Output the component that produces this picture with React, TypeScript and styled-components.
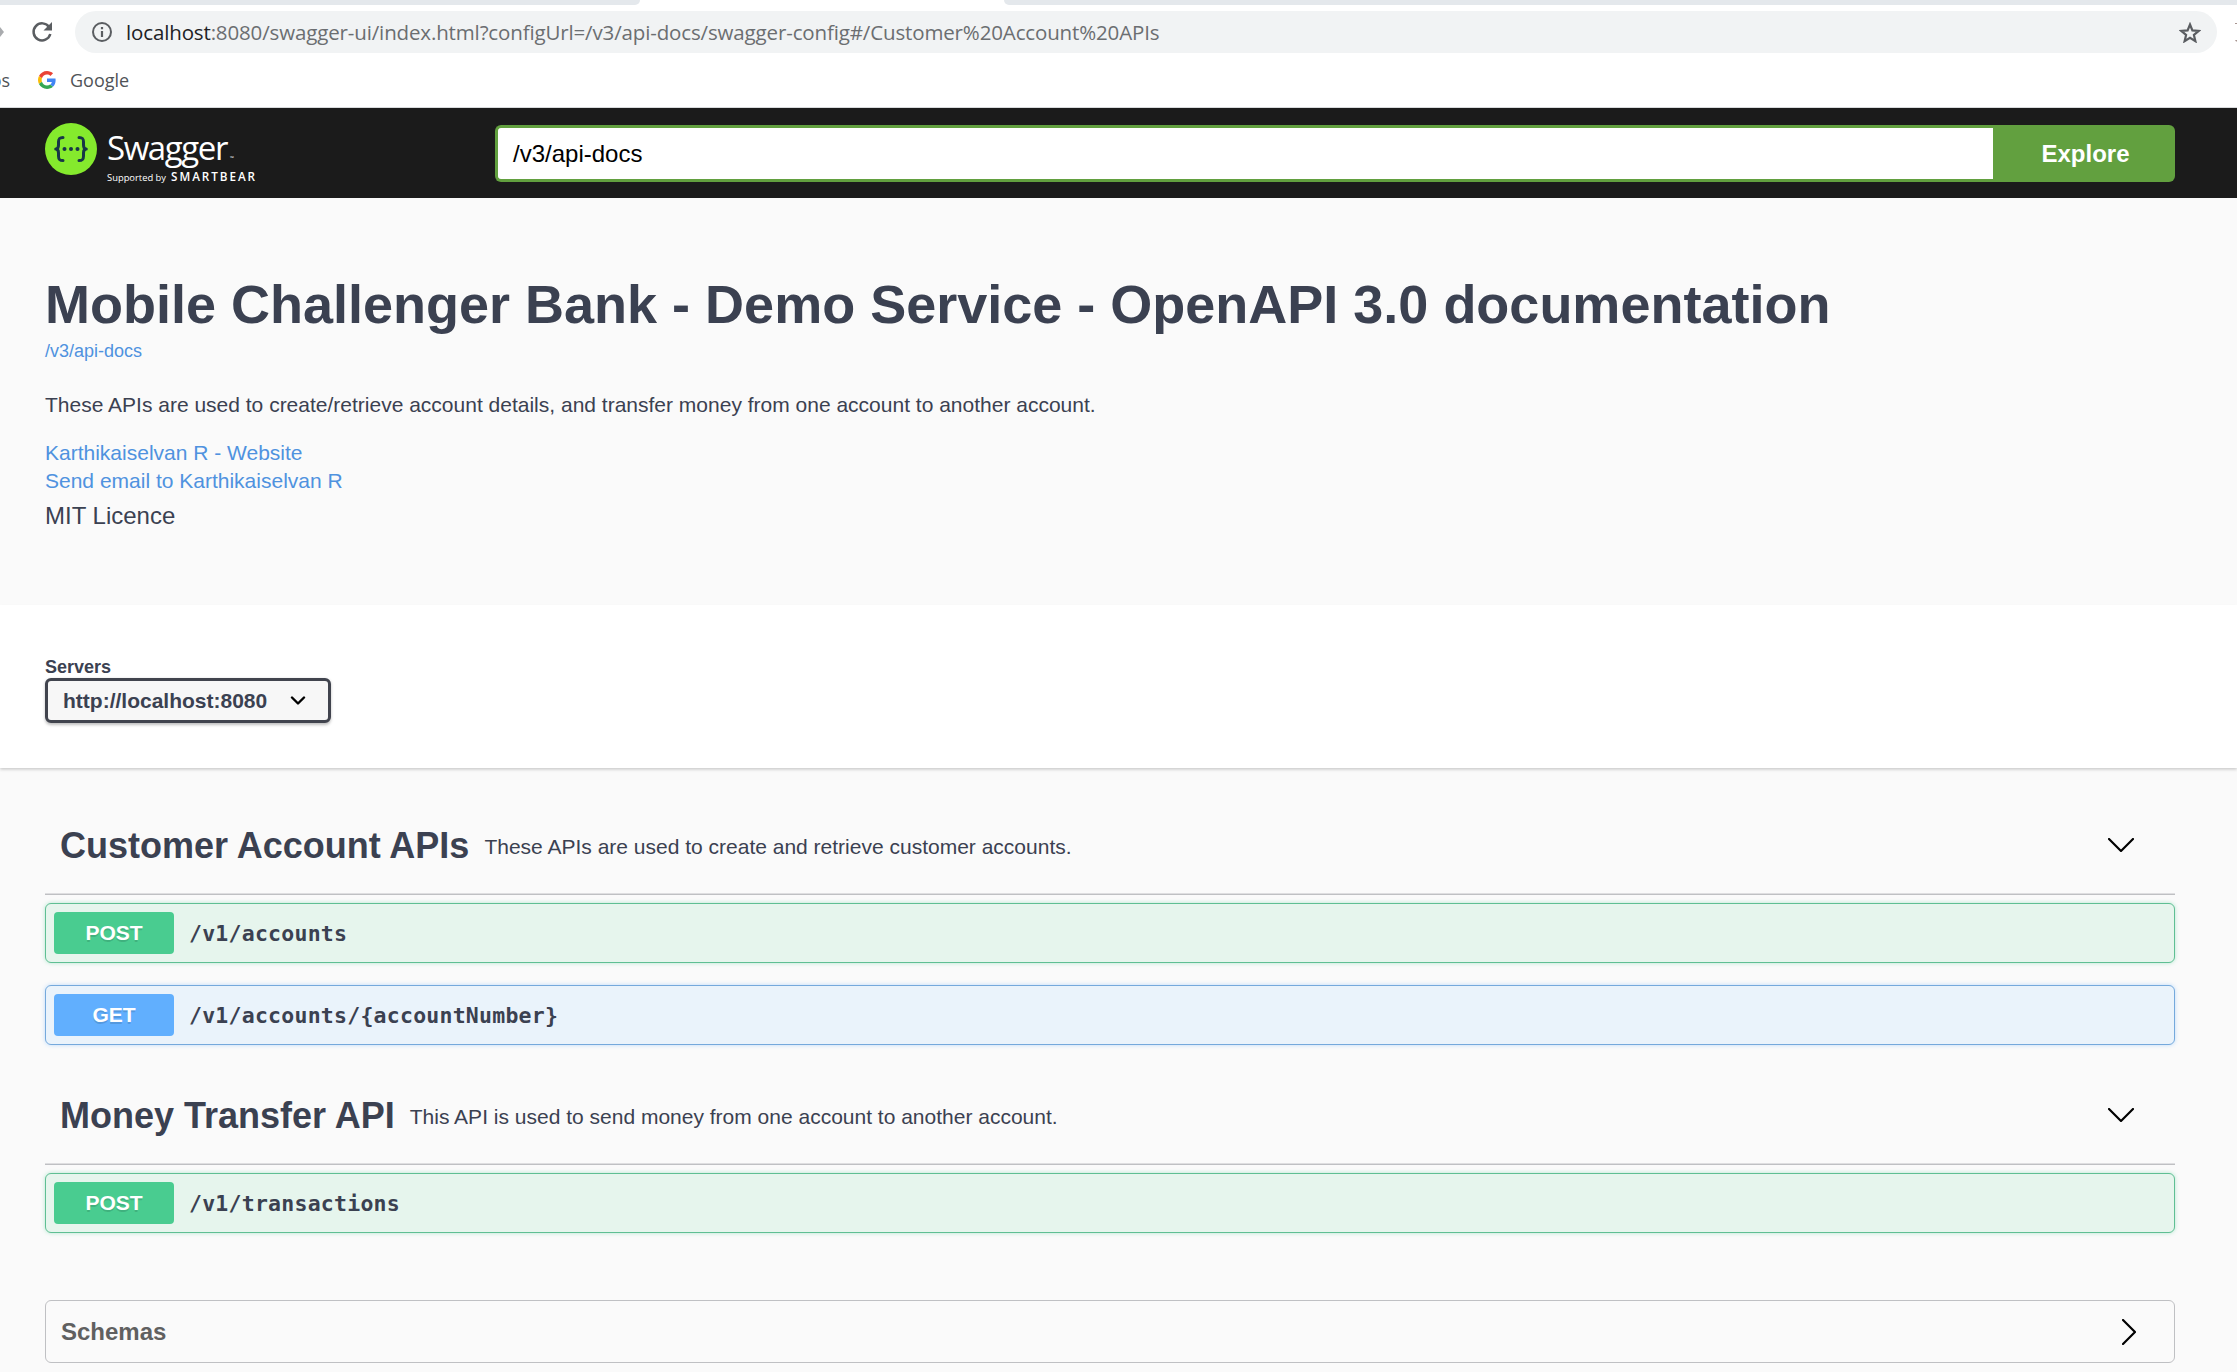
import React from "react";
import styled, { createGlobalStyle } from "styled-components";

const Global = createGlobalStyle`
  * { box-sizing: border-box; }
  html, body { margin: 0; padding: 0; background: #fafafa; overflow: hidden; }
  body { font-family: "Liberation Sans", Arial, sans-serif; color: #3b4151; }
  a { color: #4f92df; text-decoration: none; }
  svg { display: block; flex: none; }
`;

const Page = styled.div`
  width: 2237px;
  height: 1372px;
  overflow: hidden;
  display: flex;
  flex-direction: column;
  > * { flex: none; }
`;

const Browser = styled.header`
  height: 108px;
  background: #fff;
  border-bottom: 1px solid #d8dadc;
  font-family: "Open Sans", "Noto Sans", sans-serif;
`;

const TabStrip = styled.div`
  display: flex;
  justify-content: space-between;
  height: 5px;
`;

const TabEdge = styled.div<{ $w: number; $side: "left" | "right" }>`
  width: ${(p) => p.$w}px;
  background: #e4e8ec;
  border-radius: ${(p) => (p.$side === "left" ? "0 0 8px 0" : "0 0 0 8px")};
`;

const Toolbar = styled.div`
  display: flex;
  align-items: center;
  height: 42px;
  margin-top: 6px;
`;

const NavIcons = styled.div`
  display: flex;
  justify-content: space-between;
  align-items: center;
  width: 53px;
  margin-right: 22px;
`;

const Omnibox = styled.div`
  display: flex;
  align-items: center;
  width: 2142px;
  height: 42px;
  margin-right: 18px;
  padding: 0 16px 0 17px;
  border-radius: 21px;
  background: #f1f3f4;
`;

const Url = styled.span`
  flex: 1;
  margin-left: 14px;
  font-size: 20.5px;
  letter-spacing: -0.14px;
  line-height: 42px;
  white-space: nowrap;
  color: #6b6e71;
  b { font-weight: 400; color: #202124; }
`;

const Bookmarks = styled.div`
  display: flex;
  align-items: center;
  height: 54px;
  font-size: 18px;
  color: #505357;
`;

const Clipped = styled.span`
  display: flex;
  justify-content: flex-end;
  width: 10px;
  margin-right: 28px;
  overflow: hidden;
`;

const BookmarkLabel = styled.span`
  margin: -1px 0 0 14px;
`;

const TopBar = styled.div`
  display: flex;
  height: 90px;
  padding: 15px 62px 0 45px;
  background: #1b1b1b;
`;

const Logo = styled.div`
  display: flex;
  width: 450px;
  color: #fff;
  font-family: "Open Sans", sans-serif;
`;

const LogoWords = styled.div`
  margin-left: 10px;
`;

const Wordmark = styled.div`
  display: flex;
  align-items: baseline;
  height: 45px;
  padding-top: 2px;
  font-size: 33px;
  line-height: 45px;
  letter-spacing: -1.4px;
  small { font-size: 5px; letter-spacing: 0; margin-left: 3px; }
`;

const Tagline = styled.div`
  display: flex;
  align-items: baseline;
  gap: 5px;
  line-height: 16px;
  font-size: 9.4px;
  white-space: nowrap;
  b { font-size: 11.7px; font-weight: 600; letter-spacing: 1.95px; }
`;

const SearchForm = styled.div`
  display: flex;
  flex: 1;
  height: 57px;
  margin-top: 2px;
`;

const SearchInput = styled.div`
  flex: 1;
  padding-left: 15px;
  border: 3px solid #62a03f;
  border-right: 0;
  border-radius: 6px 0 0 6px;
  background: #fff;
  color: #000;
  font-size: 24px;
  line-height: 51px;
`;

const ExploreButton = styled.div`
  width: 182px;
  padding-left: 3px;
  border-radius: 0 6px 6px 0;
  background: #62a03f;
  color: #fff;
  font-size: 24px;
  font-weight: 700;
  line-height: 57px;
  text-align: center;
`;

const Info = styled.section`
  height: 407px;
  padding: 75px 45px 0;
`;

const Title = styled.h1`
  margin: 0;
  font-size: 54px;
  line-height: 62px;
  white-space: nowrap;
`;

const InfoLine = styled.div<{ $size: number; $top?: number; $h: number }>`
  margin-top: ${(p) => p.$top ?? 0}px;
  font-size: ${(p) => p.$size}px;
  line-height: ${(p) => p.$h}px;
`;

const Servers = styled.section`
  height: 163px;
  padding: 51px 45px 0;
  background: #fff;
  box-shadow: 0 1.5px 3px rgba(0, 0, 0, 0.2);
`;

const ServersLabel = styled.div`
  font-size: 18px;
  font-weight: 700;
  line-height: 22px;
`;

const Select = styled.div`
  display: flex;
  align-items: center;
  justify-content: space-between;
  width: 286px;
  height: 45px;
  padding: 0 22px 0 15px;
  border: 3px solid #41444e;
  border-radius: 6px;
  background: #f7f7f7;
  box-shadow: 0 1.5px 3px rgba(0, 0, 0, 0.25);
  font-size: 21px;
  font-weight: 700;
`;

const Operations = styled.main`
  padding: 30px 62px 0 45px;
`;

const TagHead = styled.div`
  display: flex;
  align-items: center;
  height: 97px;
  padding: 0 41px 0 15px;
  border-bottom: 1px solid #bfc0c3;
  box-shadow: inset 0 -1px 0 #dedee0;
  svg { margin-bottom: 3px; }
`;

const TagSection = styled.section`
  margin-bottom: 23px;
  ${TagHead} { margin-bottom: 8px; }
`;

const TagName = styled.h3`
  margin: 0 15px 0 0;
  font-size: 36px;
  line-height: 42px;
`;

const TagText = styled.span`
  flex: 1;
  padding-top: 2px;
  font-size: 21px;
`;

const tones = {
  POST: { solid: "#49cc90", line: "#5fbf93", fill: "#e6f5ed" },
  GET: { solid: "#61affe", line: "#75a9dc", fill: "#eaf3fb" },
};
type Verb = keyof typeof tones;

const OpRow = styled.div<{ $verb: Verb }>`
  display: flex;
  align-items: center;
  height: 60px;
  margin-bottom: 22px;
  padding-left: 8px;
  border: 1px solid ${(p) => tones[p.$verb].line};
  border-radius: 6px;
  background: ${(p) => tones[p.$verb].fill};
  box-shadow: 0 0 4px ${(p) => tones[p.$verb].solid}66;
`;

const Method = styled.span<{ $verb: Verb }>`
  width: 120px;
  margin-right: 15px;
  border-radius: 4px;
  background: ${(p) => tones[p.$verb].solid};
  color: #fff;
  font-size: 21px;
  font-weight: 700;
  line-height: 42px;
  text-align: center;
  text-shadow: 0 1.5px 0 rgba(0, 0, 0, 0.12);
`;

const Path = styled.span`
  font-family: "DejaVu Sans Mono", monospace;
  font-size: 21.5px;
  letter-spacing: 0.24px;
  font-weight: 700;
`;

const Schemas = styled.section`
  display: flex;
  align-items: center;
  justify-content: space-between;
  height: 63px;
  margin-top: 67px;
  padding: 0 38px 0 15px;
  border: 1px solid #bfc0c3;
  border-radius: 6px;
  color: #606060;
  font-size: 24px;
  font-weight: 700;
`;

const Chevron = ({ d, w, h, s = 2.2 }: { d: string; w: number; h: number; s?: number }) => (
  <svg width={w} height={h} viewBox={`0 0 ${w} ${h}`} fill="none" stroke="#000" strokeWidth={s} strokeLinecap="round" strokeLinejoin="round">
    <path d={d} />
  </svg>
);

const SwaggerMark = () => (
  <svg width="52" height="52" viewBox="0 0 52 52">
    <circle cx="26" cy="26" r="26" fill="#85ea2d" />
    <g fill="none" stroke="#173647" strokeWidth="3" strokeLinecap="round" strokeLinejoin="round">
      <path d="M18 14.500c-4 0-4.500 1.500-4.500 4.500v3c0 2.500-1 4-2.800 4 1.800 0 2.800 1.500 2.800 4v3c0 3 .5 4.500 4.500 4.500" />
      <path d="M34 14.500c4 0 4.500 1.500 4.500 4.500v3c0 2.500 1 4 2.800 4-1.800 0-2.800 1.500-2.800 4v3c0 3-.5 4.500-4.500 4.500" />
    </g>
    <g fill="#173647">
      <circle cx="19.500" cy="26" r="2" />
      <circle cx="26" cy="26" r="2" />
      <circle cx="32.500" cy="26" r="2" />
    </g>
  </svg>
);

const sections: { name: string; text: string; ops: [Verb, string][] }[] = [
  {
    name: "Customer Account APIs",
    text: "These APIs are used to create and retrieve customer accounts.",
    ops: [["POST", "/v1/accounts"], ["GET", "/v1/accounts/{accountNumber}"]],
  },
  {
    name: "Money Transfer API",
    text: "This API is used to send money from one account to another account.",
    ops: [["POST", "/v1/transactions"]],
  },
];

export default function App() {
  return (
    <Page>
      <Global />
      <Browser>
        <TabStrip>
          <TabEdge $w={640} $side="left" />
          <TabEdge $w={1233} $side="right" />
        </TabStrip>
        <Toolbar>
          <NavIcons>
            <svg width="4" height="10" viewBox="0 0 4 10"><path d="M0 0l4 5-4 5z" fill="#a9abae" /></svg>
            <svg width="22" height="22" viewBox="0 0 22 22" fill="none">
              <path d="M18.200 6.200A8.500 8.500 0 1 0 19.300 13" stroke="#5a5d61" strokeWidth="2.500" />
              <path d="M21 1v8.500h-8.500z" fill="#5a5d61" />
            </svg>
          </NavIcons>
          <Omnibox>
            <svg width="20" height="20" viewBox="0 0 20 20" fill="none" stroke="#5a5d61" strokeWidth="2">
              <circle cx="10" cy="10" r="9" />
              <path d="M10 9v6M10 5v2.200" strokeWidth="2.200" />
            </svg>
            <Url><b>localhost</b>:8080/swagger-ui/index.html?configUrl=/v3/api-docs/swagger-config#/Customer%20Account%20APIs</Url>
            <svg width="22" height="21" viewBox="0 0 22 21" fill="none" stroke="#5a5d61" strokeWidth="2.200">
              <path d="M11 2.500l2.400 5.900 6.300.5-4.800 4.100 1.500 6.200-5.400-3.300-5.400 3.300 1.500-6.200-4.800-4.100 6.300-.5z" />
            </svg>
          </Omnibox>
          <svg width="2" height="20" viewBox="0 0 2 20">
            <path d="M0 1h2v1H0zM0 18h2v1.500H1z" fill="#a89590" />
          </svg>
        </Toolbar>
        <Bookmarks>
          <Clipped>ps</Clipped>
          <svg width="18" height="18" viewBox="0 0 48 48">
            <path fill="#EA4335" d="M24 9.500c3.540 0 6.710 1.220 9.210 3.600l6.850-6.850C35.900 2.380 30.470 0 24 0 14.620 0 6.510 5.380 2.560 13.220l7.980 6.190C12.430 13.720 17.740 9.500 24 9.500z" />
            <path fill="#4285F4" d="M46.980 24.550c0-1.570-.15-3.090-.38-4.550H24v9.020h12.940c-.58 2.960-2.260 5.480-4.780 7.180l7.730 6c4.510-4.180 7.090-10.360 7.090-17.650z" />
            <path fill="#FBBC05" d="M10.530 28.590c-.48-1.450-.76-2.990-.76-4.590s.27-3.140.76-4.590l-7.980-6.190C.92 16.460 0 20.120 0 24c0 3.880.92 7.540 2.560 10.780l7.970-6.190z" />
            <path fill="#34A853" d="M24 48c6.480 0 11.930-2.130 15.890-5.810l-7.730-6c-2.150 1.450-4.920 2.300-8.160 2.300-6.260 0-11.570-4.220-13.470-9.910l-7.980 6.190C6.510 42.620 14.620 48 24 48z" />
          </svg>
          <BookmarkLabel>Google</BookmarkLabel>
        </Bookmarks>
      </Browser>

      <TopBar>
        <Logo>
          <SwaggerMark />
          <LogoWords>
            <Wordmark>Swagger<small>™</small></Wordmark>
            <Tagline>Supported by <b>SMARTBEAR</b></Tagline>
          </LogoWords>
        </Logo>
        <SearchForm>
          <SearchInput>/v3/api-docs</SearchInput>
          <ExploreButton>Explore</ExploreButton>
        </SearchForm>
      </TopBar>

      <Info>
        <Title>Mobile Challenger Bank - Demo Service - OpenAPI 3.0 documentation</Title>
        <InfoLine $size={18} $top={5} $h={22}><a>/v3/api-docs</a></InfoLine>
        <InfoLine $size={21} $top={29} $h={28}>These APIs are used to create/retrieve account details, and transfer money from one account to another account.</InfoLine>
        <InfoLine $size={21} $top={20} $h={28}><a>Karthikaiselvan R - Website</a></InfoLine>
        <InfoLine $size={21} $h={28}><a>Send email to Karthikaiselvan R</a></InfoLine>
        <InfoLine $size={24} $top={7} $h={28}>MIT Licence</InfoLine>
      </Info>

      <Servers>
        <ServersLabel>Servers</ServersLabel>
        <Select>
          http://localhost:8080
          <Chevron w={16} h={9} d="M2 1.500l6 6 6-6" s={2.4} />
        </Select>
      </Servers>

      <Operations>
        {sections.map((s) => (
          <TagSection key={s.name}>
            <TagHead>
              <TagName>{s.name}</TagName>
              <TagText>{s.text}</TagText>
              <Chevron w={26} h={14} d="M1 1l12 12 12-12" />
            </TagHead>
            {s.ops.map(([verb, path]) => (
              <OpRow key={path} $verb={verb}>
                <Method $verb={verb}>{verb}</Method>
                <Path>{path}</Path>
              </OpRow>
            ))}
          </TagSection>
        ))}
        <Schemas>
          Schemas
          <Chevron w={14} h={26} d="M1 1l12 12-12 12" />
        </Schemas>
      </Operations>
    </Page>
  );
}
